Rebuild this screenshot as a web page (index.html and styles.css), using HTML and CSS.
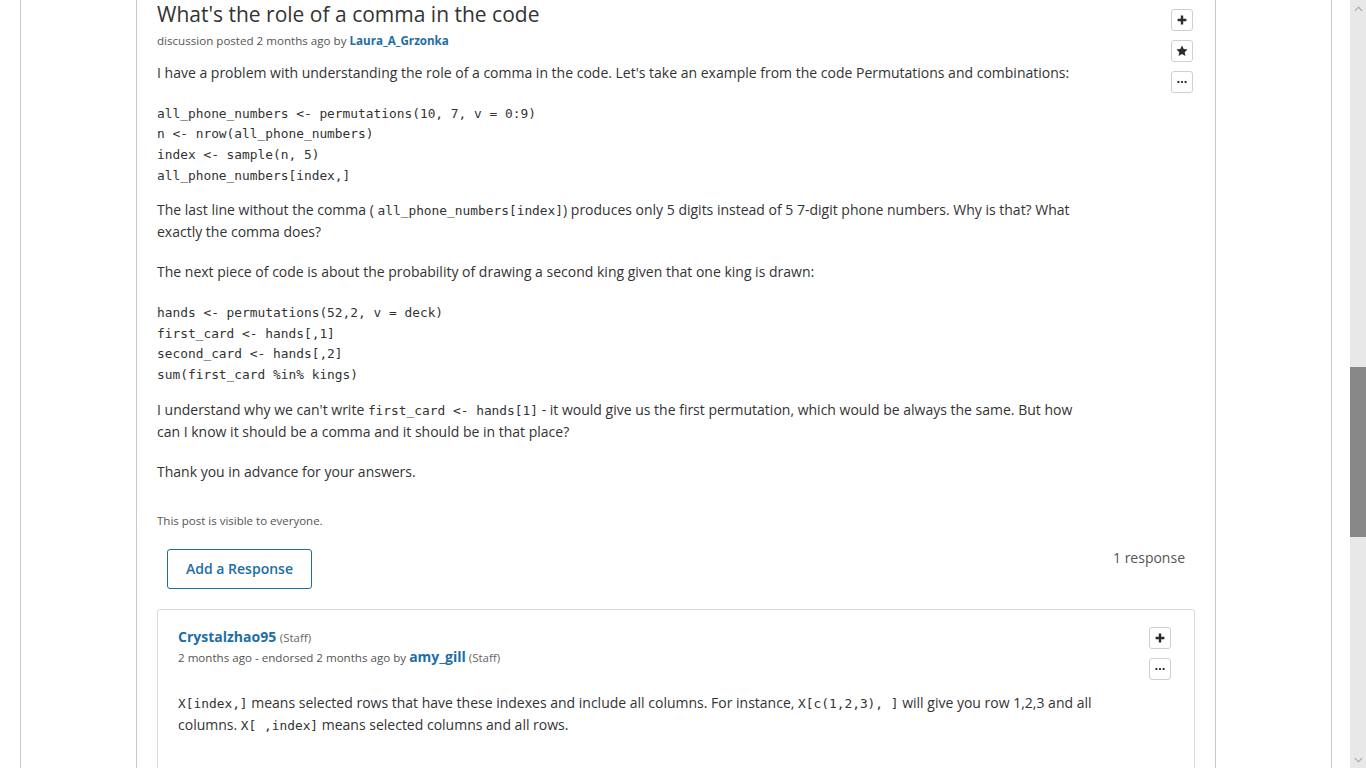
FILE: index.html
```html
<!DOCTYPE html>
<html lang="en">
<head>
<meta charset="utf-8">
<title>What's the role of a comma in the code</title>
<link rel="stylesheet" href="styles.css">
</head>
<body>
<div class="page">
  <div class="frame">
    <div class="side"></div>
    <main class="discussion">
      <article class="post">
        <div class="post-main">
          <h1 class="post-title">What's the role of a comma in the code</h1>
          <div class="post-meta">discussion posted 2 months ago by <a class="user" href="#">Laura_A_Grzonka</a></div>
          <div class="post-body">
            <p>I have a problem with understanding the role of a comma in the code. Let's take an example from the code Permutations and combinations:</p>
<pre>all_phone_numbers &lt;- permutations(10, 7, v = 0:9)
n &lt;- nrow(all_phone_numbers)
index &lt;- sample(n, 5)
all_phone_numbers[index,]</pre>
            <p>The last line without the comma ( <code>all_phone_numbers[index]</code>) produces only 5 digits instead of 5 7-digit phone numbers. Why is that? What exactly the comma does?</p>
            <p>The next piece of code is about the probability of drawing a second king given that one king is drawn:</p>
<pre>hands &lt;- permutations(52,2, v = deck)
first_card &lt;- hands[,1]
second_card &lt;- hands[,2]
sum(first_card %in% kings)</pre>
            <p>I understand why we can't write <code>first_card &lt;- hands[1]</code> - it would give us the first permutation, which would be always the same. But how can I know it should be a comma and it should be in that place?</p>
            <p>Thank you in advance for your answers.</p>
          </div>
          <div class="post-visibility">This post is visible to everyone.</div>
        </div>
        <div class="actions">
          <button class="act" aria-label="Follow"><svg class="ico-plus" viewBox="0 0 10 10"><path d="M3.8 0.6h2.4v3.2h3.2v2.4H6.2v3.2H3.8V6.2H0.6V3.8h3.2z"/></svg></button>
          <button class="act" aria-label="Vote"><svg class="ico-star" viewBox="0 0 20 20"><path d="M10 0.8l2.8 5.9 6.4.8-4.7 4.4 1.2 6.4L10 15.2l-5.7 3.1 1.2-6.4L0.8 7.5l6.4-.8z"/></svg></button>
          <button class="act" aria-label="More"><svg class="ico-dots" viewBox="0 0 12 4"><rect x="0.5" y="0.8" width="2.4" height="2.4" rx="0.6"/><rect x="4.8" y="0.8" width="2.4" height="2.4" rx="0.6"/><rect x="9.1" y="0.8" width="2.4" height="2.4" rx="0.6"/></svg></button>
        </div>
      </article>

      <div class="response-bar">
        <button class="add-response">Add a Response</button>
        <span class="response-count">1 response</span>
      </div>

      <section class="response">
        <div class="response-main">
          <div class="resp-author"><a class="user" href="#">Crystalzhao95</a> <span class="role">(Staff)</span></div>
          <div class="resp-meta">2 months ago - endorsed 2 months ago by <a class="user big" href="#">amy_gill</a> <span class="role">(Staff)</span></div>
          <div class="resp-body">
            <p><code>X[index,]</code> means selected rows that have these indexes and include all columns. For instance, <code>X[c(1,2,3), ]</code> will give you row 1,2,3 and all columns. <code>X[ ,index]</code> means selected columns and all rows.</p>
          </div>
        </div>
        <div class="actions">
          <button class="act" aria-label="Follow"><svg class="ico-plus" viewBox="0 0 10 10"><path d="M3.8 0.6h2.4v3.2h3.2v2.4H6.2v3.2H3.8V6.2H0.6V3.8h3.2z"/></svg></button>
          <button class="act" aria-label="More"><svg class="ico-dots" viewBox="0 0 12 4"><rect x="0.5" y="0.8" width="2.4" height="2.4" rx="0.6"/><rect x="4.8" y="0.8" width="2.4" height="2.4" rx="0.6"/><rect x="9.1" y="0.8" width="2.4" height="2.4" rx="0.6"/></svg></button>
        </div>
      </section>
    </main>
    <div class="side"></div>
  </div>
</div>
<div class="scrollbar">
  <div class="sb-arrow"><svg viewBox="0 0 10 6"><path d="M1 5l4-4 4 4" fill="none" stroke="#a3a3a3" stroke-width="1.2"/></svg></div>
  <div class="sb-track">
    <div class="sb-space-top"></div>
    <div class="sb-thumb"></div>
  </div>
  <div class="sb-arrow"><svg viewBox="0 0 10 6"><path d="M1 1l4 4 4-4" fill="none" stroke="#a3a3a3" stroke-width="1.2"/></svg></div>
</div>
</body>
</html>
```
FILE: styles.css
```css
* { box-sizing: border-box; }
html, body { margin: 0; height: 768px; overflow: hidden; }
body {
  display: flex;
  background: #fff;
  font-family: "Open Sans", "Liberation Sans", sans-serif;
  color: #333;
  font-size: 14px;
}
.page { flex: 1; padding-left: 20px; height: 768px; }
.frame {
  width: 1312px;
  height: 768px;
  border-left: 1px solid #c9c9c9;
  border-right: 1px solid #c9c9c9;
  display: grid;
  grid-template-columns: 115px 1080px 115px;
}
.discussion {
  border-left: 1px solid #c9c9c9;
  border-right: 1px solid #c9c9c9;
  padding: 0 20px;
}
.post { display: flex; }
.post-main { flex: 1; }
.post-title {
  margin: 0;
  font-size: 21px;
  font-weight: 400;
  line-height: 28px;
  color: #333;
}
.post-meta {
  margin-top: 3px;
  font-size: 11.6px;
  line-height: 20px;
  color: #555;
}
.user { color: #1d6ea6; font-weight: 700; text-decoration: none; }
.post-body { margin-top: 11px; width: 940px; }
.post-body p, .resp-body p { margin: 0 0 18px; line-height: 22px; }
pre {
  margin: 19.5px 0 13px;
  font-family: "DejaVu Sans Mono", "Liberation Mono", monospace;
  font-size: 12.85px;
  line-height: 20.7px;
  color: #333;
}
code {
  font-family: "DejaVu Sans Mono", "Liberation Mono", monospace;
  font-size: 12.85px;
  line-height: 1;
}
.post-visibility {
  margin-top: 30px;
  font-size: 11.5px;
  line-height: 16px;
  color: #555;
}
.actions {
  width: 24px;
  margin-top: 9px;
  display: flex;
  flex-direction: column;
  gap: 9px;
}
.act {
  width: 22px;
  height: 22px;
  padding: 0;
  border: 1px solid #cfcfcf;
  border-radius: 3px;
  background: #fff;
  display: flex;
  align-items: center;
  justify-content: center;
}
.act svg { fill: #2b2b2b; }
.ico-plus { width: 10px; height: 10px; }
.ico-star { width: 12px; height: 12px; }
.ico-dots { width: 10px; height: 4px; }
.response-bar {
  margin-top: 20px;
  padding: 0 10px;
  display: flex;
  justify-content: space-between;
  align-items: flex-start;
}
.add-response {
  width: 145px;
  height: 40px;
  border: 1px solid #1d6ea6;
  border-radius: 3px;
  background: #fff;
  color: #1d6ea6;
  font-family: "Open Sans", "Liberation Sans", sans-serif;
  font-size: 14px;
  font-weight: 600;
  padding: 0;
}
.response-count { margin-top: -1px; line-height: 20px; color: #555; font-size: 14px; }
.response {
  margin-top: 20px;
  border: 1px solid #dcdcdc;
  border-radius: 3px;
  padding: 17.5px 21px 0 20px;
  display: flex;
  height: 200px;
}
.response .actions { margin-top: -0.5px; }
.response-main { flex: 1; }
.resp-author { line-height: 20px; font-size: 14px; }
.role { font-size: 11.5px; font-weight: 400; color: #666; }
.resp-meta { font-size: 11.6px; line-height: 20px; color: #555; }
.resp-meta .big { font-size: 14px; line-height: 1; }
.resp-body { margin-top: 24px; width: 930px; }
.scrollbar {
  width: 16px;
  height: 768px;
  background: #e8e8e8;
  display: flex;
  flex-direction: column;
}
.sb-arrow { height: 17px; display: flex; align-items: center; justify-content: center; }
.sb-arrow svg { width: 9px; height: 6px; }
.sb-track { flex: 1; }
.sb-space-top { height: 350px; }
.sb-thumb { height: 170px; background: #888; }
```
